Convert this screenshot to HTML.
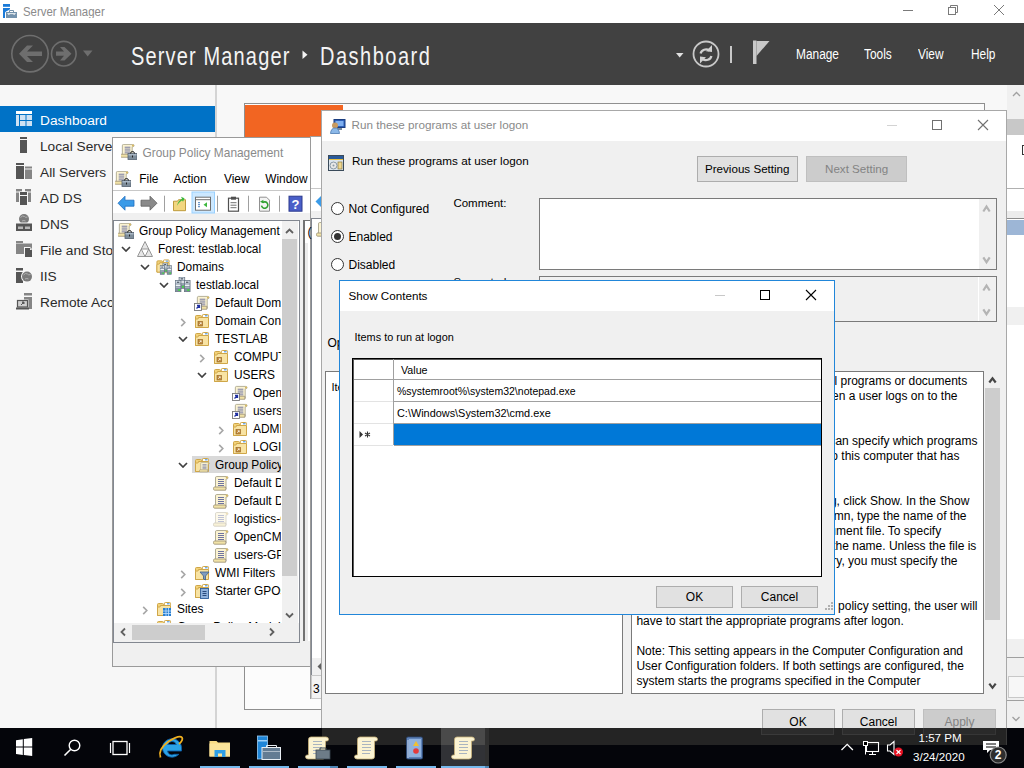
<!DOCTYPE html>
<html><head><meta charset="utf-8">
<style>
*{margin:0;padding:0;box-sizing:border-box}
html,body{width:1024px;height:768px;overflow:hidden}
body{position:relative;font-family:"Liberation Sans",sans-serif;font-size:12px;color:#000;background:#f8f8f8}
.a{position:absolute}
.t{position:absolute;white-space:nowrap;line-height:1}
svg{position:absolute;overflow:visible}
</style></head><body>

<!-- ============ SERVER MANAGER (background) ============ -->
<div class="a" style="left:0;top:0;width:1024px;height:23px;background:#fff"></div>
<svg style="left:0;top:0" width="24" height="23">
  <rect x="3" y="4" width="7" height="2.8" fill="#1a7ad8"/>
  <path d="M3 8 H10 V9.2 Q8 10.8 6 11.5 Q5 12 5 13 V18 H3 Z" fill="#1a7ad8"/>
  <rect x="6" y="12" width="11" height="6" fill="#7593ad"/>
  <path d="M9.5 12 V10.5 H13.5 V12" fill="none" stroke="#7593ad" stroke-width="1"/>
  <path d="M7 13.2 H16 L14.5 14.8 H8.5 Z" fill="#fff"/>
  <rect x="9.5" y="14.3" width="4" height="0.8" fill="#5f7f9a"/>
</svg>
<div class="t" style="left:23px;top:6.3px;font-size:11.4px;color:#8a8a8a;transform:scaleY(1.07);transform-origin:0 0">Server Manager</div>
<!-- window controls -->
<div class="a" style="left:903px;top:10px;width:10px;height:1px;background:#7a7a7a"></div>
<svg style="left:946px;top:4px" width="14" height="13">
  <rect x="2.5" y="3.5" width="7" height="7" fill="none" stroke="#7a7a7a"/>
  <path d="M4.5 3.5 v-2 h7 v7 h-2" fill="none" stroke="#7a7a7a"/>
</svg>
<svg style="left:993px;top:4px" width="12" height="12">
  <path d="M1 1 L11 11 M11 1 L1 11" stroke="#7a7a7a" stroke-width="1"/>
</svg>

<!-- dark header -->
<div class="a" style="left:0;top:23px;width:1024px;height:62px;background:#414141"></div>
<svg style="left:0;top:23px" width="100" height="62">
  <circle cx="30" cy="30.7" r="18.2" fill="none" stroke="#6e6e6e" stroke-width="1.6"/>
  <path d="M19 30.7 L27 22.5 L33 22.5 L27 28.5 L42 28.5 L42 33 L27 33 L33 39 L27 39 Z" fill="#6e6e6e"/>
  <circle cx="63.8" cy="30.7" r="12.3" fill="none" stroke="#6e6e6e" stroke-width="1.6"/>
  <path d="M56 28.6 L64 28.6 L60 24 L64.5 24 L71.5 30.7 L64.5 37.4 L60 37.4 L64 32.8 L56 32.8 Z" fill="#6e6e6e"/>
  <path d="M83 27.5 L92.5 27.5 L87.7 33.5 Z" fill="#6e6e6e"/>
</svg>
<div class="t" style="left:131px;top:42.8px;font-size:20px;letter-spacing:1.15px;color:#f4f4f4;transform:scaleY(1.27);transform-origin:0 0">Server Manager</div>
<svg style="left:300px;top:48px" width="10" height="14"><path d="M2.5 2.5 L7.5 6.7 L2.5 11 Z" fill="#f4f4f4"/></svg>
<div class="t" style="left:320px;top:42.8px;font-size:20px;letter-spacing:1.5px;color:#f4f4f4;transform:scaleY(1.27);transform-origin:0 0">Dashboard</div>

<svg style="left:670px;top:23px" width="110" height="62">
  <path d="M6 30 L13.5 30 L9.7 34.5 Z" fill="#e0e0e0"/>
  <circle cx="36" cy="31" r="12.5" fill="none" stroke="#c8c8c8" stroke-width="1.8"/>
  <path d="M30.6 30.5 A5.5 5 0 0 1 39.5 27.5" fill="none" stroke="#d0d0d0" stroke-width="2.2"/>
  <path d="M42 22 L42 29 L36 28.2 Z" fill="#d0d0d0"/>
  <path d="M41.4 33 A5.5 5 0 0 1 32.5 36" fill="none" stroke="#d0d0d0" stroke-width="2.2"/>
  <path d="M30 40.5 L30 33.5 L36 34.3 Z" fill="#d0d0d0"/>
  <rect x="60" y="23" width="2" height="17" fill="#c8c8c8"/>
  <rect x="83" y="17.5" width="3.5" height="23.5" fill="#c8c8c8"/>
  <path d="M86.5 18 L99.5 18 L86.5 33 Z" fill="#c8c8c8"/>
</svg>
<div class="t" style="left:796px;top:47.5px;font-size:11.9px;color:#fff;transform:scaleY(1.26);transform-origin:0 0">Manage</div>
<div class="t" style="left:864px;top:47.5px;font-size:11.9px;color:#fff;transform:scaleY(1.26);transform-origin:0 0">Tools</div>
<div class="t" style="left:918px;top:47.5px;font-size:11.9px;color:#fff;transform:scaleY(1.26);transform-origin:0 0">View</div>
<div class="t" style="left:971px;top:47.5px;font-size:11.9px;color:#fff;transform:scaleY(1.26);transform-origin:0 0">Help</div>

<!-- left nav -->
<div class="a" style="left:0;top:85px;width:215px;height:643px;background:#f7f7f7"></div>
<div class="a" style="left:215px;top:85px;width:2px;height:643px;background:#d4d4d4"></div>
<div class="a" style="left:0;top:106px;width:215px;height:26px;background:#0072c6"></div>
<svg style="left:16px;top:111px" width="16" height="16">
  <rect x="0" y="0" width="16" height="3" fill="#fff"/>
  <rect x="0" y="4" width="3" height="11" fill="#cfe2f3"/>
  <rect x="4" y="4" width="5.5" height="5" fill="#cfe2f3"/><rect x="10.5" y="4" width="5.5" height="5" fill="#cfe2f3"/>
  <rect x="4" y="10" width="5.5" height="5" fill="#cfe2f3"/><rect x="10.5" y="10" width="5.5" height="5" fill="#cfe2f3"/>
</svg>
<div class="t" style="left:40px;top:113.5px;font-size:13.7px;color:#fff">Dashboard</div>
<svg style="left:0;top:0" width="40" height="320">
  <g fill="#555">
    <rect x="20" y="137" width="7" height="2"/><rect x="20" y="140" width="7" height="13"/>
    <rect x="16" y="163" width="8" height="2"/><rect x="16" y="166" width="8" height="13"/>
  </g>
  <g fill="#858585">
    <rect x="25" y="166.5" width="7" height="2"/><rect x="25" y="169.5" width="7" height="9.5"/>
    <rect x="16" y="189" width="6" height="2.5"/><rect x="25" y="189" width="6" height="2.5"/>
    <rect x="16" y="192.5" width="3" height="9.5"/><rect x="28" y="192.5" width="3" height="9.5"/>
  </g>
  <rect x="19.5" y="191.5" width="8" height="14" fill="#f7f7f7"/>
  <rect x="20" y="192" width="7" height="3" fill="#555"/><rect x="20" y="196" width="7" height="9" fill="#555"/>
  <circle cx="24" cy="219" r="5" fill="#7a7a7a"/>
  <path d="M20.5 217.5 q2 -2.5 4 -1 q1 1.5 3 0.5 M22 221 q2 -1 3.5 0" stroke="#b0b0b0" stroke-width="1" fill="none"/>
  <rect x="15.5" y="222.5" width="17" height="9" fill="#f7f7f7"/>
  <rect x="16" y="223.5" width="16" height="7.5" fill="#555"/>
  <rect x="18" y="226.5" width="5" height="2.5" fill="#b8b8b8"/><rect x="25" y="226.5" width="5" height="2.5" fill="#b8b8b8"/>
  <rect x="16" y="241" width="7" height="2" fill="#858585"/><rect x="16" y="243.5" width="16" height="10.5" fill="#858585"/>
  <path d="M24 247 h6 l2.5 2.5 v8 h-8.5 z" fill="#f7f7f7"/>
  <path d="M25 248 h5 l2 2 v7 h-7 z" fill="#555"/>
  <path d="M30 248 v2 h2" fill="#f0f0f0"/>
  <rect x="16" y="268" width="7" height="2.5" fill="#555"/><rect x="16" y="272" width="7" height="11" fill="#555"/>
  <circle cx="27" cy="276.6" r="6" fill="#f7f7f7"/>
  <circle cx="27" cy="276.6" r="5" fill="#7a7a7a"/>
  <path d="M23.5 275 q2 -2.5 4 -1 q1 1.5 3 0.5 M25 279 q2 -1 3.5 0" stroke="#b0b0b0" stroke-width="1" fill="none"/>
  <rect x="24" y="293" width="8" height="2.5" fill="#858585"/><rect x="24" y="297" width="8" height="12" fill="#858585"/>
  <rect x="16.5" y="299.5" width="12" height="10" fill="#f7f7f7"/>
  <rect x="17.5" y="300.5" width="10" height="6.5" fill="#d0d0d0" stroke="#555" stroke-width="1.2"/>
  <path d="M21 305 l3 -3 M22 302 h2 v2" stroke="#555" stroke-width="1"/>
  <rect x="16" y="307.5" width="13" height="2" fill="#555"/>
</svg>
<div class="t" style="left:40px;top:139.5px;font-size:13.7px;color:#2b2b2b">Local Server</div>
<div class="t" style="left:40px;top:165.5px;font-size:13.7px;color:#2b2b2b">All Servers</div>
<div class="t" style="left:40px;top:191.5px;font-size:13.7px;color:#2b2b2b">AD DS</div>
<div class="t" style="left:40px;top:217.5px;font-size:13.7px;color:#2b2b2b">DNS</div>
<div class="t" style="left:40px;top:243.5px;font-size:13.7px;color:#2b2b2b">File and Storage Services</div>
<div class="t" style="left:40px;top:269.5px;font-size:13.7px;color:#2b2b2b">IIS</div>
<div class="t" style="left:40px;top:295.5px;font-size:13.7px;color:#2b2b2b">Remote Access</div>


<!-- content tile -->
<div class="a" style="left:244px;top:103px;width:741px;height:607px;border:1px solid #8f8f8f;background:#fcfcfc"></div>
<div class="a" style="left:245px;top:105px;width:98px;height:40px;background:#f26522"></div>

<!-- right strip window -->
<div id="rstrip"></div>
<!-- RS START -->
<div class="a" style="left:1007px;top:85px;width:17px;height:643px;background:#fff"></div>
<div class="a" style="left:1007px;top:85px;width:17px;height:34px;background:#f0f0f0"></div>
<svg style="left:1007px;top:85px" width="17" height="34"><path d="M6 11 L9.5 7.5 L13 11" fill="none" stroke="#a0a0a0" stroke-width="1.3"/></svg>
<div class="a" style="left:1007px;top:119px;width:17px;height:16px;background:#c8c8c8"></div>
<div class="a" style="left:1022px;top:145px;width:10px;height:10px;border:1px solid #333;background:#fff"></div>
<div class="a" style="left:1007px;top:188px;width:17px;height:1px;background:#b0b0b0"></div>
<div class="a" style="left:1007px;top:211px;width:17px;height:7px;background:#ececec"></div>
<div class="a" style="left:1007px;top:218px;width:17px;height:1px;background:#8c8c8c"></div>
<div class="a" style="left:1007px;top:220px;width:17px;height:15px;background:#9db6d6"></div>
<div class="a" style="left:1007px;top:307px;width:17px;height:18px;background:#f0f0f0"></div>
<div class="a" style="left:1007px;top:639px;width:17px;height:18px;background:#f0f0f0"></div>
<div class="a" style="left:1007px;top:657px;width:17px;height:1px;background:#a0a0a0"></div>
<div class="a" style="left:1007px;top:658px;width:17px;height:42px;background:#f0f0f0"></div>
<div class="a" style="left:1008px;top:676px;width:20px;height:22px;background:#f7f7f7;border:1px solid #c8c8c8"></div>
<div class="a" style="left:1007px;top:700px;width:17px;height:1px;background:#a0a0a0"></div>
<div class="a" style="left:1007px;top:701px;width:17px;height:27px;background:#f0f0f0"></div>
<svg style="left:1007px;top:701px" width="17" height="27"><path d="M5.5 16 L9 19.5 L12.5 16" fill="none" stroke="#a0a0a0" stroke-width="1.3"/></svg>
<!-- RS END -->

<!-- GPEditor window behind -->
<div id="gpe"></div>
<!-- GPE START -->
<div class="a" style="left:310px;top:136px;width:14px;height:563px;background:#f0f0f0;border:1px solid #a0a0a0"></div>
<div class="a" style="left:311px;top:137px;width:12px;height:52px;background:#fff"></div>
<div class="a" style="left:311px;top:188px;width:12px;height:1px;background:#c8c8c8"></div>
<div class="a" style="left:311px;top:189px;width:12px;height:22px;background:#fff"></div>
<svg style="left:311px;top:189px" width="12" height="22"><path d="M4.5 12.5 L11 6 V19 Z" fill="#3b9be8"/></svg>
<div class="a" style="left:311px;top:218px;width:12px;height:457px;background:#fff;border-left:1px solid #828790;border-top:1px solid #828790"></div>
<svg style="left:316px;top:221px" width="8" height="16"><use href="#i-scroll" x="0" y="0" width="16" height="16"/></svg>
<div class="a" style="left:312px;top:658px;width:11px;height:17px;background:#f0f0f0"></div>
<svg style="left:312px;top:658px" width="11" height="17"><path d="M9 5 L5.5 8.5 L9 12 Z" fill="#606060"/></svg>
<div class="a" style="left:311px;top:675px;width:12px;height:24px;background:#f3f3f3;border:1px solid #c8c8c8;border-right:none"></div>
<div class="t" style="left:313px;top:683px;font-size:12px;color:#000">3</div>
<!-- GPE END -->

<!-- ============ GPM window ============ -->
<div id="gpm"></div>
<!-- GPM START -->
<svg width="0" height="0" style="position:absolute;left:0;top:0">
<defs>
<symbol id="i-scroll" viewBox="0 0 16 16">
  <path d="M3.5 1.5 H13.5 Q15 1.5 15 2.8 Q15 4 13.5 4 H13 V13.5 H2.5 V3 Q2.5 1.5 3.5 1.5 Z" fill="#fbf3d2" stroke="#a9a48a" stroke-width="0.9"/>
  <circle cx="13.8" cy="2.6" r="1.1" fill="#d8b860"/>
  <path d="M5 4.5 h6 M5 6.5 h6 M5 8.5 h6 M5 10.5 h6" stroke="#6f74a0" stroke-width="1"/>
  <path d="M1.5 12 H12.5 V15.2 H1.5 Q0.5 15.2 0.5 13.6 Q0.5 12 1.5 12 Z" fill="#f1e2a6" stroke="#a3977a" stroke-width="0.9"/>
  <path d="M12.5 12 Q14 13.6 12.5 15.2" fill="#e0e0e0" stroke="#a3977a" stroke-width="0.8"/>
</symbol>
<symbol id="i-gpm" viewBox="0 0 16 16">
  <use href="#i-scroll" x="-1" y="-1" width="15" height="15"/>
  <rect x="7" y="9.5" width="9" height="6" fill="#7e8d9a" stroke="#556270" stroke-width="0.8"/>
  <rect x="7.5" y="10" width="8" height="1.5" fill="#a9b8c6"/>
  <path d="M9.5 9.5 q0 -2 2 -2 q2 0 2 2" fill="none" stroke="#222" stroke-width="1"/>
  <rect x="11" y="11.5" width="1" height="2" fill="#222"/>
</symbol>
<symbol id="i-folder" viewBox="0 0 16 16">
  <path d="M2.5 2.5 H6.5 Q7.5 2.5 7.5 3.5 V14.5 H1.5 V3.5 Q1.5 2.5 2.5 2.5 Z" fill="#f2d27a" stroke="#cfa648" stroke-width="1"/>
  <rect x="8.5" y="1.5" width="6" height="3" rx="0.8" fill="#fff" stroke="#cfa648" stroke-width="1"/>
  <rect x="11" y="2.3" width="2.6" height="1" fill="#3b8de0"/>
  <path d="M4.5 4.5 H14.5 V14.5 H1.5 V7 Q1.5 6 2.5 6 H3.5 Q4.5 6 4.5 4.5 Z" fill="#f8e3a3" stroke="#cfa648" stroke-width="1"/>
</symbol>
<symbol id="i-ou" viewBox="0 0 16 16">
  <use href="#i-folder" x="0" y="0" width="16" height="16"/>
  <rect x="4" y="8.5" width="4.5" height="4.5" fill="#c08a3c" stroke="#9a6a28" stroke-width="0.7"/><path d="M5.2 11.8 l2 -2 M5.8 9.8 h1.4 v1.4" stroke="#fff" stroke-width="0.7" fill="none"/>
</symbol>
<symbol id="i-servers" viewBox="0 0 16 16"><rect x="4" y="0" width="5.8" height="11.4" fill="#8190a0" stroke="#5d6a77" stroke-width="0.6"/><rect x="4.6" y="0.6" width="4.6" height="2.6" fill="#dde6ee"/><rect x="5.6" y="1.4" width="2.5999999999999996" height="1" fill="#2a3340"/><rect x="4.6" y="4.2" width="4.6" height="1.6" fill="#eef2f6"/><rect x="4.6" y="6.6" width="4.6" height="0.8" fill="#b8c4cf"/><rect x="7.000000000000001" y="8.8" width="2" height="1.8" fill="#3fdc3f"/><rect x="0.2" y="3.3" width="5.8" height="11.4" fill="#8190a0" stroke="#5d6a77" stroke-width="0.6"/><rect x="0.8" y="3.9" width="4.6" height="2.6" fill="#dde6ee"/><rect x="1.8" y="4.699999999999999" width="2.5999999999999996" height="1" fill="#2a3340"/><rect x="0.8" y="7.5" width="4.6" height="1.6" fill="#eef2f6"/><rect x="0.8" y="9.899999999999999" width="4.6" height="0.8" fill="#b8c4cf"/><rect x="3.2" y="12.1" width="2" height="1.8" fill="#3fdc3f"/><rect x="9.3" y="3.3" width="5.8" height="11.4" fill="#8190a0" stroke="#5d6a77" stroke-width="0.6"/><rect x="9.9" y="3.9" width="4.6" height="2.6" fill="#dde6ee"/><rect x="10.9" y="4.699999999999999" width="2.5999999999999996" height="1" fill="#2a3340"/><rect x="9.9" y="7.5" width="4.6" height="1.6" fill="#eef2f6"/><rect x="9.9" y="9.899999999999999" width="4.6" height="0.8" fill="#b8c4cf"/><rect x="12.3" y="12.1" width="2" height="1.8" fill="#3fdc3f"/></symbol>
<symbol id="i-domains" viewBox="0 0 16 16">
  <use href="#i-folder" x="-0.5" y="-0.5" width="15" height="15"/>
  <use href="#i-servers" x="3.8" y="4" width="12.5" height="12.5"/>
</symbol>
<symbol id="i-forest" viewBox="0 0 16 16">
  <path d="M8 0.5 L15.5 15.5 H0.5 Z" fill="#e6e6e6" stroke="#8c8c8c" stroke-width="0.9"/>
  <path d="M4.25 8 H11.75 L8 15.5 Z" fill="#fff" stroke="#8c8c8c" stroke-width="0.9"/>
</symbol>
<symbol id="i-gpolink" viewBox="0 0 16 16">
  <use href="#i-scroll" x="1" y="0" width="15" height="15"/>
  <rect x="0.5" y="8.5" width="7" height="7" fill="#fff" stroke="#7a7a7a" stroke-width="0.9"/>
  <path d="M2.5 13.5 L5.5 10.5 M3 10.5 h2.5 v2.5" stroke="#2030a0" stroke-width="1.3" fill="none"/>
</symbol>
<symbol id="i-gpofolder" viewBox="0 0 16 16">
  <use href="#i-folder" x="0" y="0" width="16" height="16"/>
  <use href="#i-scroll" x="5" y="4" width="11" height="12"/>
</symbol>
<symbol id="i-wmi" viewBox="0 0 16 16">
  <use href="#i-folder" x="0" y="0" width="16" height="16"/>
  <path d="M6 7 h9 l-3.5 4 v4 l-2 -1 v-3 z" fill="#7f9cc0" stroke="#3e5f8a" stroke-width="0.8"/>
</symbol>
<symbol id="i-starter" viewBox="0 0 16 16">
  <use href="#i-folder" x="0" y="0" width="16" height="16"/>
  <rect x="6.5" y="5.5" width="8" height="10" fill="#8fb1dc" stroke="#2f5e9a" stroke-width="0.9"/>
  <path d="M8.5 8.5 h4 M8.5 10.5 h4 M8.5 12.5 h4" stroke="#1d3e70" stroke-width="0.9"/>
</symbol>
<symbol id="i-sites" viewBox="0 0 16 16">
  <use href="#i-folder" x="0" y="0" width="16" height="16"/>
  <rect x="7" y="7" width="8" height="8" fill="#2a7fd0"/>
  <path d="M7 10 h8 M7 12.5 h8 M10 7 v8 M12.5 7 v8" stroke="#bfe0ff" stroke-width="0.8"/>
</symbol>
<symbol id="chev-d" viewBox="0 0 10 6"><path d="M1 1 L5 5 L9 1" fill="none" stroke="#404040" stroke-width="1.7"/></symbol>
<symbol id="chev-r" viewBox="0 0 6 10"><path d="M1 1 L5 5 L1 9" fill="none" stroke="#a6a6a6" stroke-width="1.8"/></symbol>
</defs></svg>
<div class="a" style="left:112px;top:137px;width:199px;height:530px;background:#f0f0f0;border:1px solid #9a9a9a"></div>
<div class="a" style="left:113px;top:138px;width:197px;height:52px;background:#fff"></div>
<svg style="left:121px;top:144px" width="16" height="16"><use href="#i-gpm" width="16" height="16"/></svg>
<div class="t" style="left:142.5px;top:148px;font-size:11.9px;color:#8a8a8a">Group Policy Management</div>
<svg style="left:115px;top:171px" width="16" height="16"><use href="#i-gpm" width="16" height="16"/></svg>
<div class="t" style="left:139.3px;top:174px;font-size:11.9px;color:#000">File</div>
<div class="t" style="left:173.5px;top:174px;font-size:11.9px;color:#000">Action</div>
<div class="t" style="left:224px;top:174px;font-size:11.9px;color:#000">View</div>
<div class="t" style="left:265.2px;top:174px;font-size:11.9px;color:#000">Window</div>
<div class="a" style="left:113px;top:190px;width:197px;height:1px;background:#c8c8c8"></div>
<div class="a" style="left:113px;top:191px;width:197px;height:22px;background:#fff"></div>
<div class="a" style="left:113px;top:213px;width:197px;height:7px;background:#f0f0f0"></div>
<svg style="left:113px;top:191px" width="197" height="22"><g transform="translate(0,1.7)">
  <path d="M5 10.5 L12 3.5 V7.5 H21 V13.5 H12 V17.5 Z" fill="#3b9be8" stroke="#1f6fc0" stroke-width="0.8"/>
  <path d="M44 10.5 L37 3.5 V7.5 H28 V13.5 H37 V17.5 Z" fill="#8a8a8a" stroke="#606060" stroke-width="0.8"/>
  <rect x="51" y="3" width="1" height="16" fill="#a0a0a0"/>
  <path d="M60.5 8.5 h4 l1 -1.5 h7 v11 h-12 z" fill="#f2d680" stroke="#b8922f" stroke-width="0.9"/>
  <path d="M64 13 q1 -5 5 -7 l-1 -2 l3.5 1.5 l-1.5 3.5 l-1 -1.5 q-3 2 -5 5.5z" fill="#3db83d"/>
  <rect x="79" y="-0.7" width="22.5" height="21" fill="#cce8ff" stroke="#99d1ff" stroke-width="1"/>
  <rect x="82.5" y="4.5" width="15" height="13" fill="#fff" stroke="#6f6f6f" stroke-width="1"/>
  <path d="M82.5 7 h15" stroke="#6f6f6f"/>
  <path d="M85 10 h2 M85 12 h2 M85 14 h2" stroke="#4a7fbf"/>
  <path d="M94 9.5 v5 l-3.5 -2.5z" fill="#3db83d"/>
  <rect x="104" y="3" width="1" height="16" fill="#a0a0a0"/>
  <rect x="115.5" y="5.5" width="10" height="13" fill="#fff" stroke="#505050" stroke-width="1.2"/>
  <rect x="118" y="4" width="5" height="3" fill="#505050"/>
  <path d="M117.5 10 h6 M117.5 12.5 h6 M117.5 15 h6" stroke="#707070"/>
  <rect x="135" y="3" width="1" height="16" fill="#a0a0a0"/>
  <path d="M146.5 4.5 h7 l3 3 v11 h-10 z" fill="#f4f4f4" stroke="#909090"/>
  <path d="M148.5 13 a3.2 3.2 0 1 0 1 -3" fill="none" stroke="#30a030" stroke-width="1.6"/>
  <path d="M147 9 l3 1.5 l0.5 -3.5z" fill="#30a030"/>
  <rect x="166" y="3" width="1" height="16" fill="#a0a0a0"/>
  <rect x="176" y="3.5" width="13" height="15" fill="#4a5fc8" stroke="#2c3a8e"/>
  <text x="182.5" y="16" font-family="Liberation Sans" font-size="13" font-weight="bold" fill="#fff" text-anchor="middle">?</text>
</g></svg>
<div class="a" style="left:113px;top:220px;width:187px;height:423px;background:#fff;border:1px solid #828790"></div>
<div class="a" style="left:114px;top:221px;width:167px;height:402px;overflow:hidden">
<svg style="left:4px;top:2.0px" width="16" height="16"><use href="#i-gpm" width="16" height="16"/></svg>
<div class="t" style="left:25px;top:5.1px;font-size:11.9px;color:#000">Group Policy Management</div>
<svg style="left:7px;top:24.5px" width="10" height="6"><use href="#chev-d" width="10" height="6"/></svg>
<svg style="left:23px;top:20.0px" width="16" height="16"><use href="#i-forest" width="16" height="16"/></svg>
<div class="t" style="left:44px;top:23.1px;font-size:11.9px;color:#000">Forest: testlab.local</div>
<svg style="left:26px;top:42.5px" width="10" height="6"><use href="#chev-d" width="10" height="6"/></svg>
<svg style="left:42px;top:38.0px" width="16" height="16"><use href="#i-domains" width="16" height="16"/></svg>
<div class="t" style="left:63px;top:41.1px;font-size:11.9px;color:#000">Domains</div>
<svg style="left:45px;top:60.5px" width="10" height="6"><use href="#chev-d" width="10" height="6"/></svg>
<svg style="left:61px;top:56.0px" width="16" height="16"><use href="#i-servers" width="16" height="16"/></svg>
<div class="t" style="left:82px;top:59.1px;font-size:11.9px;color:#000">testlab.local</div>
<svg style="left:80px;top:74.0px" width="16" height="16"><use href="#i-gpolink" width="16" height="16"/></svg>
<div class="t" style="left:101px;top:77.1px;font-size:11.9px;color:#000">Default Domain Policy</div>
<svg style="left:66px;top:97.2px" width="6" height="9"><use href="#chev-r" width="6" height="9"/></svg>
<svg style="left:80px;top:92.0px" width="16" height="16"><use href="#i-ou" width="16" height="16"/></svg>
<div class="t" style="left:101px;top:95.1px;font-size:11.9px;color:#000">Domain Controllers</div>
<svg style="left:64px;top:114.5px" width="10" height="6"><use href="#chev-d" width="10" height="6"/></svg>
<svg style="left:80px;top:110.0px" width="16" height="16"><use href="#i-ou" width="16" height="16"/></svg>
<div class="t" style="left:101px;top:113.1px;font-size:11.9px;color:#000">TESTLAB</div>
<svg style="left:85px;top:133.2px" width="6" height="9"><use href="#chev-r" width="6" height="9"/></svg>
<svg style="left:99px;top:128.0px" width="16" height="16"><use href="#i-ou" width="16" height="16"/></svg>
<div class="t" style="left:120px;top:131.1px;font-size:11.9px;color:#000">COMPUTERS</div>
<svg style="left:83px;top:150.5px" width="10" height="6"><use href="#chev-d" width="10" height="6"/></svg>
<svg style="left:99px;top:146.0px" width="16" height="16"><use href="#i-ou" width="16" height="16"/></svg>
<div class="t" style="left:120px;top:149.1px;font-size:11.9px;color:#000">USERS</div>
<svg style="left:118px;top:164.0px" width="16" height="16"><use href="#i-gpolink" width="16" height="16"/></svg>
<div class="t" style="left:139px;top:167.1px;font-size:11.9px;color:#000">OpenCMD</div>
<svg style="left:118px;top:182.0px" width="16" height="16"><use href="#i-gpolink" width="16" height="16"/></svg>
<div class="t" style="left:139px;top:185.1px;font-size:11.9px;color:#000">users-GPO</div>
<svg style="left:104px;top:205.2px" width="6" height="9"><use href="#chev-r" width="6" height="9"/></svg>
<svg style="left:118px;top:200.0px" width="16" height="16"><use href="#i-ou" width="16" height="16"/></svg>
<div class="t" style="left:139px;top:203.1px;font-size:11.9px;color:#000">ADMINS</div>
<svg style="left:104px;top:223.2px" width="6" height="9"><use href="#chev-r" width="6" height="9"/></svg>
<svg style="left:118px;top:218.0px" width="16" height="16"><use href="#i-ou" width="16" height="16"/></svg>
<div class="t" style="left:139px;top:221.1px;font-size:11.9px;color:#000">LOGISTICS</div>
<div class="a" style="left:78px;top:235.0px;width:100px;height:17px;background:#d9d9d9"></div>
<svg style="left:64px;top:240.5px" width="10" height="6"><use href="#chev-d" width="10" height="6"/></svg>
<svg style="left:80px;top:236.0px" width="16" height="16"><use href="#i-gpofolder" width="16" height="16"/></svg>
<div class="t" style="left:101px;top:239.1px;font-size:11.9px;color:#000">Group Policy Objects</div>
<svg style="left:99px;top:254.0px" width="16" height="16"><use href="#i-scroll" width="16" height="16"/></svg>
<div class="t" style="left:120px;top:257.1px;font-size:11.9px;color:#000">Default Domain Controllers Policy</div>
<svg style="left:99px;top:272.0px" width="16" height="16"><use href="#i-scroll" width="16" height="16"/></svg>
<div class="t" style="left:120px;top:275.1px;font-size:11.9px;color:#000">Default Domain Policy</div>
<svg style="left:99px;top:290.0px" width="16" height="16"><use href="#i-scroll" width="16" height="16" opacity="0.45"/></svg>
<div class="t" style="left:120px;top:293.1px;font-size:11.9px;color:#000">logistics-GPO</div>
<svg style="left:99px;top:308.0px" width="16" height="16"><use href="#i-scroll" width="16" height="16"/></svg>
<div class="t" style="left:120px;top:311.1px;font-size:11.9px;color:#000">OpenCMD</div>
<svg style="left:99px;top:326.0px" width="16" height="16"><use href="#i-scroll" width="16" height="16"/></svg>
<div class="t" style="left:120px;top:329.1px;font-size:11.9px;color:#000">users-GPO</div>
<svg style="left:66px;top:349.2px" width="6" height="9"><use href="#chev-r" width="6" height="9"/></svg>
<svg style="left:80px;top:344.0px" width="16" height="16"><use href="#i-wmi" width="16" height="16"/></svg>
<div class="t" style="left:101px;top:347.1px;font-size:11.9px;color:#000">WMI Filters</div>
<svg style="left:66px;top:367.2px" width="6" height="9"><use href="#chev-r" width="6" height="9"/></svg>
<svg style="left:80px;top:362.0px" width="16" height="16"><use href="#i-starter" width="16" height="16"/></svg>
<div class="t" style="left:101px;top:365.1px;font-size:11.9px;color:#000">Starter GPOs</div>
<svg style="left:28px;top:385.2px" width="6" height="9"><use href="#chev-r" width="6" height="9"/></svg>
<svg style="left:42px;top:380.0px" width="16" height="16"><use href="#i-sites" width="16" height="16"/></svg>
<div class="t" style="left:63px;top:383.1px;font-size:11.9px;color:#000">Sites</div>
<svg style="left:42px;top:398.0px" width="16" height="16"><use href="#i-sites" width="16" height="16"/></svg>
<div class="t" style="left:63px;top:401.1px;font-size:11.9px;color:#000">Group Policy Modeling</div>
</div>
<div class="a" style="left:282px;top:221px;width:16px;height:402px;background:#f0f0f0"></div>
<div class="a" style="left:282px;top:239px;width:15px;height:337px;background:#cdcdcd"></div>
<svg style="left:282px;top:221px" width="16" height="402"><path d="M4 12 L7.5 8.5 L11 12" fill="none" stroke="#606060" stroke-width="1.8"/><path d="M4 392.5 L7.5 396 L11 392.5" fill="none" stroke="#606060" stroke-width="1.8"/></svg>
<div class="a" style="left:114px;top:623px;width:185px;height:19px;background:#f0f0f0"></div>
<div class="a" style="left:132px;top:625px;width:73px;height:15px;background:#cdcdcd"></div>
<svg style="left:114px;top:623px" width="185" height="19"><path d="M11 5.5 L7.5 9 L11 12.5" fill="none" stroke="#606060" stroke-width="1.8"/><path d="M156 5.5 L159.5 9 L156 12.5" fill="none" stroke="#606060" stroke-width="1.8"/></svg>
<div class="a" style="left:300px;top:220px;width:10px;height:423px;background:#f0f0f0"></div>
<div class="a" style="left:303px;top:220px;width:7px;height:421px;background:#fff;border-left:2px solid #737373;border-top:1px solid #737373"></div>
<div class="a" style="left:305px;top:243px;width:3px;height:398px;background:#ececec"></div>
<div class="t" style="left:307.5px;top:226px;font-size:12px;color:#000">(</div>
<div class="a" style="left:113px;top:643px;width:197px;height:23px;background:#f0f0f0"></div>
<!-- GPM END -->












<!-- ============ RUN DIALOG ============ -->
<div id="run"></div>
<!-- RUN START -->
<div class="a" style="left:321px;top:110px;width:686px;height:636px;background:#f0f0f0;border:1px solid #a8a8a8"></div>
<div class="a" style="left:322px;top:111px;width:684px;height:30px;background:#fff"></div>
<svg style="left:330px;top:118px" width="16" height="16"><rect x="4" y="1.5" width="11" height="8" fill="#2d5fb8" stroke="#1b3e80"/><rect x="5.5" y="3" width="8" height="5" fill="#7fb0f0"/><rect x="7" y="10" width="5" height="2" fill="#7a8a9a"/><circle cx="5" cy="7.5" r="3" fill="#c89a60"/><path d="M0.5 15.5 q0.5 -5.5 4.5 -5.5 q4 0 4.5 5.5z" fill="#8bb8e8" stroke="#4a78b0" stroke-width="0.8"/></svg>
<div class="t" style="left:351.5px;top:119px;font-size:11.7px;color:#8a8a8a">Run these programs at user logon</div>
<div class="a" style="left:887px;top:125px;width:10px;height:1px;background:#d3d3d3"></div>
<div class="a" style="left:932px;top:120px;width:10px;height:10px;border:1px solid #707070"></div>
<svg style="left:978px;top:120px" width="10" height="10"><path d="M0 0 L10 10 M10 0 L0 10" stroke="#707070" stroke-width="1.1"/></svg>
<svg style="left:328px;top:155px" width="16" height="16"><rect x="0.5" y="0.5" width="15" height="15" fill="#dde6ee" stroke="#3a4a5a"/><rect x="1" y="1" width="14" height="3" fill="#2a5a9a"/><rect x="1" y="4" width="14" height="1" fill="#e8c040"/><circle cx="5.5" cy="10.5" r="3.5" fill="#e8e8e8" stroke="#8a9aa8"/><circle cx="5.5" cy="10.5" r="1" fill="#8a9aa8"/><rect x="10" y="7" width="4" height="7" fill="#f0d890" stroke="#8a7a40" stroke-width="0.7"/></svg>
<div class="t" style="left:352px;top:154.5px;font-size:11.7px;color:#000">Run these programs at user logon</div>
<div class="a" style="left:697px;top:156px;width:101px;height:26px;background:#e1e1e1;border:1px solid #adadad"></div>
<div class="t" style="left:705px;top:162.5px;font-size:11.62px;color:#000">Previous Setting</div>
<div class="a" style="left:806px;top:156px;width:101px;height:26px;background:#cccccc;border:1px solid #bfbfbf"></div>
<div class="t" style="left:825px;top:162.5px;font-size:11.62px;color:#838383">Next Setting</div>
<svg style="left:331px;top:202.1px" width="13" height="13"><circle cx="6.5" cy="6.5" r="6" fill="#fff" stroke="#333" stroke-width="1"/></svg>
<div class="t" style="left:348.5px;top:203.29999999999998px;font-size:12px;color:#000">Not Configured</div>
<svg style="left:331px;top:230.2px" width="13" height="13"><circle cx="6.5" cy="6.5" r="6" fill="#fff" stroke="#333" stroke-width="1"/><circle cx="6.5" cy="6.5" r="3.5" fill="#333"/></svg>
<div class="t" style="left:348.5px;top:231.39999999999998px;font-size:12px;color:#000">Enabled</div>
<svg style="left:331px;top:258.2px" width="13" height="13"><circle cx="6.5" cy="6.5" r="6" fill="#fff" stroke="#333" stroke-width="1"/></svg>
<div class="t" style="left:348.5px;top:259.4px;font-size:12px;color:#000">Disabled</div>
<div class="t" style="left:453.4px;top:198px;font-size:11.5px;color:#000">Comment:</div>
<div class="t" style="left:453.4px;top:277px;font-size:11.5px;color:#000">Supported on:</div>
<div class="a" style="left:539px;top:198px;width:458px;height:72px;background:#fff;border:1px solid #7a7a7a"></div>
<div class="a" style="left:979px;top:199px;width:17px;height:70px;background:#f0f0f0"></div>
<svg style="left:979px;top:199px" width="17" height="70"><path d="M4.3 12.5 L7.5 7.6 L10.7 12.5" fill="none" stroke="#b4b4b4" stroke-width="2.2"/><path d="M4.3 58.3 L7.5 63.2 L10.7 58.3" fill="none" stroke="#b4b4b4" stroke-width="2.2"/></svg>
<div class="a" style="left:539px;top:276px;width:458px;height:46px;background:#f0f0f0;border:1px solid #7a7a7a"></div>
<div class="a" style="left:978px;top:277px;width:1px;height:44px;background:#fff"></div>
<svg style="left:979px;top:277px" width="17" height="44"><path d="M4.3 13.5 L7.5 8.6 L10.7 13.5" fill="none" stroke="#b4b4b4" stroke-width="2.2"/><path d="M4.3 32.3 L7.5 37.2 L10.7 32.3" fill="none" stroke="#b4b4b4" stroke-width="2.2"/></svg>
<div class="t" style="left:327.5px;top:336.5px;font-size:12px;color:#000">Options:</div>
<div class="t" style="left:632px;top:336.5px;font-size:12px;color:#000">Help:</div>
<div class="a" style="left:325px;top:371px;width:298px;height:323px;background:#fff;border:1px solid #7a7a7a"></div>
<div class="t" style="left:331.5px;top:382px;font-size:11px;color:#000">Items to run at logon</div>
<div class="a" style="left:631px;top:371px;width:353px;height:323px;background:#fff;border:1px solid #7a7a7a"></div>
<div class="a" style="left:632px;top:372px;width:351px;height:321px;overflow:hidden">
<div class="t" style="right:15.799999999999955px;top:2.6999999999999886px;font-size:12px;color:#000">This policy setting specifies additional programs or documents</div>
<div class="t" style="right:25.5px;top:17.69999999999999px;font-size:12px;color:#000">that Windows starts automatically when a user logs on to the</div>
<div class="t" style="left:4.4px;top:32.69999999999999px;font-size:12px;color:#000">system.</div>
<div class="t" style="right:5.5px;top:62.69999999999999px;font-size:12px;color:#000">If you enable this policy setting, you can specify which programs</div>
<div class="t" style="right:23.600000000000023px;top:77.69999999999999px;font-size:12px;color:#000">can run at the time the user logs on to this computer that has</div>
<div class="t" style="left:4.4px;top:92.69999999999999px;font-size:12px;color:#000">this policy applied.</div>
<div class="t" style="right:13.700000000000045px;top:122.69999999999999px;font-size:12px;color:#000">To specify values for this policy setting, click Show. In the Show</div>
<div class="t" style="right:16.5px;top:137.7px;font-size:12px;color:#000">Contents dialog box in the Value column, type the name of the</div>
<div class="t" style="right:41.799999999999955px;top:152.70000000000005px;font-size:12px;color:#000">executable program (.exe) file or document file. To specify</div>
<div class="t" style="right:6.7000000000000455px;top:167.70000000000005px;font-size:12px;color:#000">another name, press ENTER, and type the name. Unless the file is</div>
<div class="t" style="right:25.5px;top:182.70000000000005px;font-size:12px;color:#000">located in the %Systemroot% directory, you must specify the</div>
<div class="t" style="left:4.4px;top:197.70000000000005px;font-size:12px;color:#000">fully qualified path to the file.</div>
<div class="t" style="right:5.5px;top:227.70000000000005px;font-size:12px;color:#000">If you disable or do not configure this policy setting, the user will</div>
<div class="t" style="left:4.4px;top:242.70000000000005px;font-size:12px;color:#000">have to start the appropriate programs after logon.</div>
<div class="t" style="left:4.4px;top:272.70000000000005px;font-size:12px;color:#000">Note: This setting appears in the Computer Configuration and</div>
<div class="t" style="left:4.4px;top:287.70000000000005px;font-size:12px;color:#000">User Configuration folders. If both settings are configured, the</div>
<div class="t" style="left:4.4px;top:302.70000000000005px;font-size:12px;color:#000">system starts the programs specified in the Computer</div>
</div>
<div class="a" style="left:985px;top:371px;width:16px;height:323px;background:#f0f0f0"></div>
<div class="a" style="left:985px;top:388px;width:15px;height:232px;background:#cdcdcd"></div>
<svg style="left:985px;top:371px" width="16" height="323"><path d="M4.3 11.5 L7.5 7.3 L10.7 11.5" fill="none" stroke="#454545" stroke-width="2.2"/><path d="M4.3 312.6 L7.5 316.8 L10.7 312.6" fill="none" stroke="#454545" stroke-width="2.2"/></svg>
<div class="a" style="left:761.5px;top:709px;width:73px;height:26px;background:#e1e1e1;border:1px solid #adadad"></div>
<div class="t" style="left:761.5px;width:73px;text-align:center;top:715.5px;font-size:12px;color:#000">OK</div>
<div class="a" style="left:842px;top:709px;width:73px;height:26px;background:#e1e1e1;border:1px solid #adadad"></div>
<div class="t" style="left:842px;width:73px;text-align:center;top:715.5px;font-size:12px;color:#000">Cancel</div>
<div class="a" style="left:923px;top:709px;width:73px;height:26px;background:#cccccc;border:1px solid #bfbfbf"></div>
<div class="t" style="left:923px;width:73px;text-align:center;top:715.5px;font-size:12px;color:#838383">Apply</div>
<!-- RUN END -->

<!-- ============ SHOW CONTENTS ============ -->
<div id="show"></div>
<!-- SHOW START -->
<div class="a" style="left:339px;top:280px;width:496px;height:335px;background:#f0f0f0;border:1px solid #2186d9"></div>
<div class="a" style="left:340px;top:281px;width:494px;height:30px;background:#fff"></div>
<div class="t" style="left:348.5px;top:290px;font-size:11.65px;color:#000">Show Contents</div>
<div class="a" style="left:715px;top:295px;width:10px;height:1px;background:#c8c8c8"></div>
<div class="a" style="left:760px;top:290px;width:10px;height:10px;border:1px solid #000"></div>
<svg style="left:806px;top:290px" width="10" height="10"><path d="M0 0 L10 10 M10 0 L0 10" stroke="#000" stroke-width="1.1"/></svg>
<div class="t" style="left:354.5px;top:331.5px;font-size:10.9px;color:#000">Items to run at logon</div>
<div class="a" style="left:352px;top:358px;width:470px;height:219px;background:#fff;border:1px solid #000;box-shadow:inset 1px 1px 0 #5a5a5a"></div>
<div class="a" style="left:393px;top:359px;width:1px;height:86px;background:#a0a0a0"></div>
<div class="a" style="left:354px;top:379px;width:467px;height:1px;background:#a0a0a0"></div>
<div class="a" style="left:354px;top:401px;width:39px;height:1px;background:#e3e3e3"></div>
<div class="a" style="left:394px;top:401px;width:427px;height:1px;background:#a0a0a0"></div>
<div class="a" style="left:354px;top:423px;width:39px;height:1px;background:#e3e3e3"></div>
<div class="a" style="left:394px;top:423px;width:427px;height:1px;background:#a0a0a0"></div>
<div class="a" style="left:354px;top:445px;width:39px;height:1px;background:#e3e3e3"></div>
<div class="a" style="left:394px;top:445px;width:427px;height:1px;background:#a0a0a0"></div>
<div class="a" style="left:394px;top:424px;width:427px;height:21px;background:#0078d7"></div>
<div class="t" style="left:401px;top:364.5px;font-size:10.7px;color:#000">Value</div>
<div class="t" style="left:397px;top:385.5px;font-size:10.5px;color:#000">%systemroot%\system32\notepad.exe</div>
<div class="t" style="left:397px;top:407.5px;font-size:10.9px;color:#000">C:\Windows\System32\cmd.exe</div>
<svg style="left:359px;top:430px" width="12" height="9"><path d="M0.5 1 L4 4.5 L0.5 8 Z" fill="#333"/><path d="M8.5 1.5 v6 M6 3 l5 3 M11 3 l-5 3" stroke="#333" stroke-width="1.1"/></svg>
<div class="a" style="left:656px;top:586px;width:77px;height:22px;background:#e1e1e1;border:1px solid #adadad"></div>
<div class="t" style="left:656px;width:77px;text-align:center;top:590.5px;font-size:12px;color:#000">OK</div>
<div class="a" style="left:741px;top:586px;width:77px;height:22px;background:#e1e1e1;border:1px solid #adadad"></div>
<div class="t" style="left:741px;width:77px;text-align:center;top:590.5px;font-size:12px;color:#000">Cancel</div>
<svg style="left:824px;top:601px" width="10" height="10"><g fill="#b0b0b0"><rect x="7" y="1" width="2" height="2"/><rect x="4" y="4" width="2" height="2"/><rect x="7" y="4" width="2" height="2"/><rect x="1" y="7" width="2" height="2"/><rect x="4" y="7" width="2" height="2"/><rect x="7" y="7" width="2" height="2"/></g></svg>
<!-- SHOW END -->

<!-- ============ TASKBAR ============ -->
<div id="taskbar"></div>
<!-- TASK START -->
<div class="a" style="left:0;top:728px;width:1024px;height:40px;background:#04050a"></div>
<div class="a" style="left:322px;top:728px;width:685px;height:17px;background:#242424"></div>
<div class="a" style="left:761px;top:728px;width:73px;height:7px;border:1px solid #3a3a3a;border-top:none;background:#2c2c2c"></div>
<div class="a" style="left:842px;top:728px;width:73px;height:7px;border:1px solid #3a3a3a;border-top:none;background:#2c2c2c"></div>
<div class="a" style="left:923px;top:728px;width:73px;height:7px;border:1px solid #363636;border-top:none;background:#2a2a2a"></div>
<div class="a" style="left:1006px;top:728px;width:1px;height:17px;background:#3a3a3a"></div>
<div class="a" style="left:441px;top:728px;width:44px;height:40px;background:#313236"></div>
<div class="a" style="left:441px;top:728px;width:44px;height:17px;background:#4a4a4a"></div>
<div class="a" style="left:485px;top:728px;width:4px;height:40px;background:#303030"></div>
<div class="a" style="left:200px;top:766px;width:40px;height:2px;background:#76b9ed"></div>
<div class="a" style="left:249px;top:766px;width:40px;height:2px;background:#76b9ed"></div>
<div class="a" style="left:298px;top:766px;width:40px;height:2px;background:#76b9ed"></div>
<div class="a" style="left:347px;top:766px;width:40px;height:2px;background:#76b9ed"></div>
<div class="a" style="left:396px;top:766px;width:40px;height:2px;background:#76b9ed"></div>
<div class="a" style="left:441px;top:766px;width:48px;height:2px;background:#76b9ed"></div>
<div class="a" style="left:485px;top:766px;width:4px;height:2px;background:#4f86b5"></div>
<div class="a" style="left:330px;top:766px;width:8px;height:2px;background:#4f86b5"></div>
<svg style="left:0;top:728px" width="1024" height="40">
  <g fill="#fff">
    <path d="M16 12.2 L22.8 11.2 V18.6 H16 Z"/><path d="M23.8 11.1 L32.2 9.9 V18.6 H23.8 Z"/>
    <path d="M16 19.6 H22.8 V27 L16 26 Z"/><path d="M23.8 19.6 H32.2 V28.1 L23.8 26.9 Z"/>
  </g>
  <circle cx="74.5" cy="17.5" r="5.3" fill="none" stroke="#fff" stroke-width="1.4"/>
  <path d="M70.8 21.2 L64.5 27.5" stroke="#fff" stroke-width="1.6"/>
  <rect x="113" y="13.5" width="14" height="13" fill="none" stroke="#fff" stroke-width="1.3"/>
  <path d="M110.5 15 v10 M129.5 15 v10" stroke="#fff" stroke-width="1.2"/>
  <path d="M181 19.5 a9.5 9.2 0 1 0 -2.6 6.8 h-4.8 a4.4 4.4 0 0 1 -6.6 -3.3 h14 z M167.2 16.5 a4.5 4.3 0 0 1 8.6 0 z" fill="#2ba3e6" stroke="#0d5fa8" stroke-width="0.9" fill-rule="evenodd" transform="translate(0.5,0)"/>
  <path d="M160.5 29.5 q-3 -8 8 -16 q11 -7 13.5 -4 q1.5 2.5 -3 6.5" fill="none" stroke="#f0b020" stroke-width="1.8"/>
  <path d="M209.5 13 h7 l1.5 1.5 h12 v14 h-20.5 z" fill="#f8dc85"/>
  <rect x="209.5" y="15.5" width="20.5" height="13" fill="#fbe49a"/>
  <path d="M214.5 29 v-7 h11 v7 h-3.5 v-3.5 h-4 v3.5 z" fill="#2f9fe6"/>
  <rect x="257.5" y="8" width="10" height="23" fill="#1f86d8" stroke="#9cd0f8" stroke-width="0.8"/>
  <rect x="258" y="12" width="9" height="1.5" fill="#9cd0f8"/>
  <rect x="262" y="19.5" width="18.5" height="12" fill="#637c93" stroke="#e8eef3" stroke-width="1"/>
  <path d="M266.5 19.5 v-2 h10 v2" fill="none" stroke="#e8eef3" stroke-width="1"/>
  <path d="M263 23.5 h17" stroke="#c0ccd6" stroke-width="0.8"/>
  <g id="tb-scroll">
   <path d="M311 9 h15 q2.5 0 2.5 2.5 q0 1.5 -2 1.5 h-1 v15.5 q0 2.5 -2.5 2.5 h-15 q-2.5 0 -2.5 -2.5 q0 -1.5 2 -1.5 h1 v-15.5 q0 -2.5 2.5 -2.5 z" fill="#fbf3d2" stroke="#c9b27a" stroke-width="0.8"/>
   <path d="M313 13.5 h9 M313 16.5 h9 M313 19.5 h9 M313 22.5 h9 M313 25.5 h8" stroke="#a9b4c0" stroke-width="1"/>
  </g>
  <rect x="316" y="22" width="14" height="9" fill="#6d7c88" stroke="#3a4650" stroke-width="0.8"/>
  <path d="M320 22 v-2 h6 v2" fill="none" stroke="#3a4650"/>
  <use href="#tb-scroll" x="49" y="0"/>
  <use href="#tb-scroll" x="146" y="0"/>
  <rect x="406.5" y="9" width="16" height="22" rx="1.5" fill="#5f83b8" stroke="#2c4a78" stroke-width="0.8"/>
  <rect x="409" y="11" width="12" height="18" fill="#8fb1dd"/>
  <path d="M413 18 l3 -5 l3 5 z" fill="#f0c030"/>
  <circle cx="416" cy="23" r="2.8" fill="#e53a3a"/>
  <path d="M408 12 v18" stroke="#dfe8f5" stroke-width="0.8"/>
  <path d="M841.5 22 l5.7 -5.7 l5.7 5.7" fill="none" stroke="#fff" stroke-width="1.3"/>
  <rect x="866.5" y="14.5" width="12" height="9" fill="none" stroke="#fff" stroke-width="1.1"/>
  <path d="M872.5 23.5 v3 M869 26.5 h7" stroke="#fff" stroke-width="1.1"/>
  <rect x="863.5" y="13.5" width="4" height="4" fill="#000" stroke="#fff" stroke-width="1"/>
  <path d="M865.5 17.5 v9" stroke="#fff" stroke-width="1"/>
  <path d="M887.5 17 h2.5 l4 -3.5 v13 l-4 -3.5 h-2.5 z" fill="none" stroke="#fff" stroke-width="1.1"/>
  <circle cx="898.5" cy="24" r="4.5" fill="#e81123"/>
  <path d="M896.5 22 l4 4 M900.5 22 l-4 4" stroke="#fff" stroke-width="1.1"/>
  <path d="M983 13 h16 v9 h-9 l-3 3 v-3 h-4 z" fill="#fff"/>
  <path d="M986 16 h10 M986 19 h10" stroke="#000" stroke-width="1"/>
  <circle cx="998.2" cy="27" r="8" fill="#2e2e2e" stroke="#8a8a8a" stroke-width="1.2"/>
  <text x="998.2" y="31.3" font-family="Liberation Sans" font-size="12" font-weight="bold" fill="#fff" text-anchor="middle">2</text>
</svg>
<div class="t" style="left:918.5px;top:732px;font-size:11.6px;color:#fff">1:57 PM</div>
<div class="t" style="left:913px;top:750.5px;font-size:11.6px;color:#fff">3/24/2020</div>
<!-- TASK END -->

</body></html>
